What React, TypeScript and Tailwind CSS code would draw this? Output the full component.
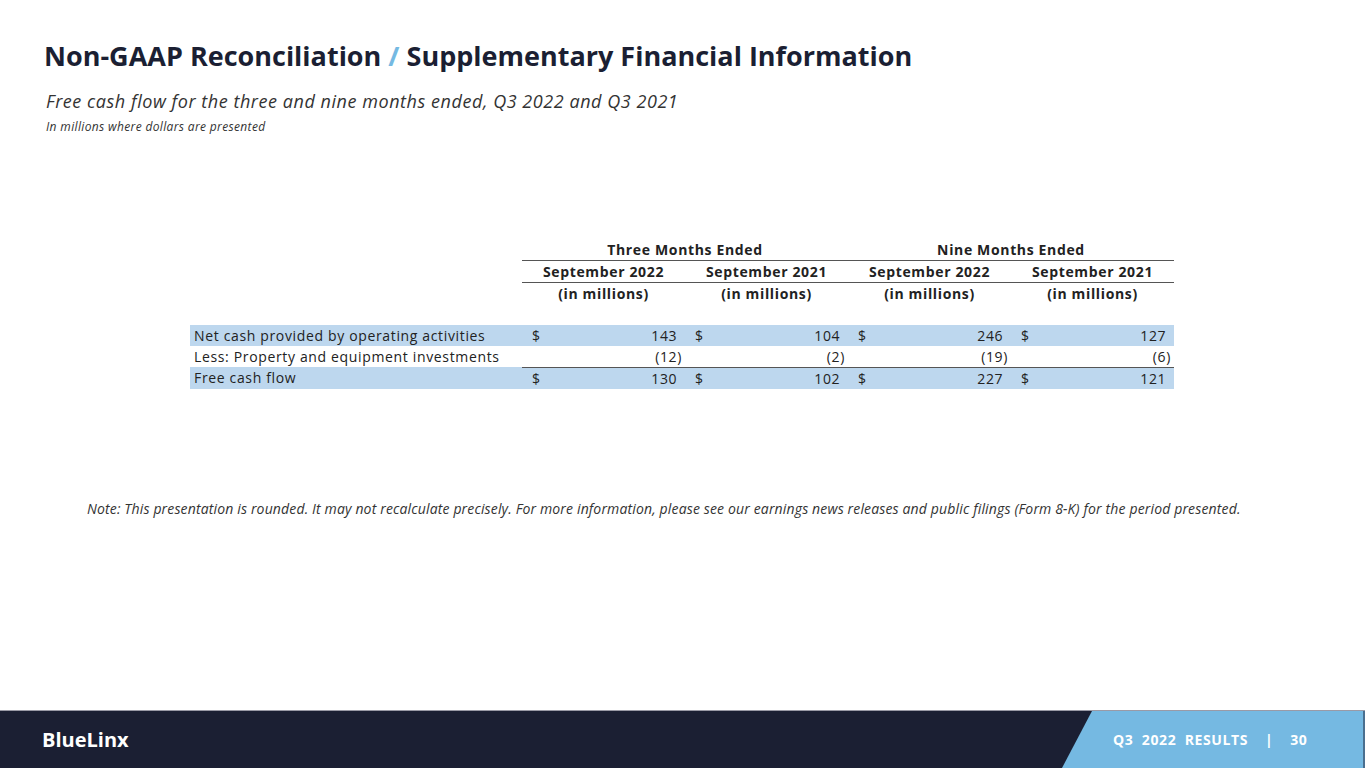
import { Fragment } from "react";

const rows = [
  { label: "Net cash provided by operating activities", shaded: true, dollar: true, values: [143, 104, 246, 127] },
  { label: "Less: Property and equipment investments", shaded: false, dollar: false, values: [-12, -2, -19, -6] },
  { label: "Free cash flow", shaded: true, dollar: true, values: [130, 102, 227, 121], topRule: true },
];

const periods = ["September 2022", "September 2021", "September 2022", "September 2021"];

function Amount({ value }: { value: number }) {
  if (value < 0) return <span>({Math.abs(value)})</span>;
  return (
    <span>
      {value}
      <span className="invisible">)</span>
    </span>
  );
}

export default function App() {
  return (
    <div
      className="flex h-[768px] w-full flex-col bg-white text-[#222222]"
      style={{ fontFamily: "'Open Sans', 'Liberation Sans', sans-serif" }}
    >
      <div className="flex-1 pl-[44px] pt-[40px]">
        <h1 className="text-[27px] font-bold leading-[32px] text-[#1b1f33]">
          Non-GAAP Reconciliation <span className="text-[#75b9e2]">/</span> Supplementary Financial Information
        </h1>
        <p className="mt-[18px] pl-[2px] text-[18px] italic leading-[22px] tracking-[0.55px] text-[#333333]">
          Free cash flow for the three and nine months ended, Q3 2022 and Q3 2021
        </p>
        <p className="mt-[8px] pl-[2px] text-[12px] italic leading-[14px] tracking-[0.35px] text-[#333333]">
          In millions where dollars are presented
        </p>

        <table className="ml-[146px] mt-[105px] table-fixed border-collapse text-[14px] leading-[21px] tracking-[0.65px]">
          <colgroup>
            <col className="w-[332px]" />
            {periods.map((_, i) => (
              <Fragment key={i}>
                <col className="w-[24px]" />
                <col className="w-[139px]" />
              </Fragment>
            ))}
          </colgroup>
          <thead className="font-bold">
            <tr className="h-[21px]">
              <th />
              <th colSpan={4} className="border-b border-[#555555] text-center font-bold">
                Three Months Ended
              </th>
              <th colSpan={4} className="border-b border-[#555555] text-center font-bold">
                Nine Months Ended
              </th>
            </tr>
            <tr className="h-[21px]">
              <th />
              {periods.map((p, i) => (
                <th key={i} colSpan={2} className="border-b border-[#555555] text-center font-bold">
                  {p}
                </th>
              ))}
            </tr>
            <tr className="h-[22px]">
              <th />
              {periods.map((_, i) => (
                <th key={i} colSpan={2} className="text-center font-bold">
                  (in millions)
                </th>
              ))}
            </tr>
            <tr className="h-[20px]">
              <th colSpan={9} />
            </tr>
          </thead>
          <tbody>
            {rows.map((r) => (
              <tr key={r.label} className={`h-[21px] ${r.shaded ? "bg-[#bdd7ee]" : ""}`}>
                <td className="whitespace-nowrap pl-[4px]">{r.label}</td>
                {r.values.map((v, i) => (
                  <Fragment key={i}>
                    <td className={`pl-[10px] ${r.topRule ? "border-t border-[#555555]" : ""}`}>
                      {r.dollar ? "$" : ""}
                    </td>
                    <td className={`pr-[3px] text-right ${r.topRule ? "border-t border-[#555555]" : ""}`}>
                      <Amount value={v} />
                    </td>
                  </Fragment>
                ))}
              </tr>
            ))}
          </tbody>
        </table>

        <p className="ml-[43px] mt-[111px] text-[14px] italic leading-[18px] tracking-[0.15px] text-[#333333]">
          Note: This presentation is rounded. It may not recalculate precisely. For more information, please see our
          earnings news releases and public filings (Form 8-K) for the period presented.
        </p>
      </div>

      <footer className="flex h-[58px] items-stretch border-t border-[#9a9aa6] bg-[#1b1f33]">
        <div className="flex flex-1 items-center pl-[42px]">
          <span className="text-[20px] font-bold text-white">BlueLinx</span>
        </div>
        <div
          className="flex w-[303px] items-center border-r-2 border-[#4a6f8f] bg-[#75b9e2] pl-[51px]"
          style={{ clipPath: "polygon(30px 0, 100% 0, 100% 100%, 0 100%)" }}
        >
          <span className="whitespace-pre text-[14px] font-bold tracking-[0.6px] text-white">
            {"Q3  2022  RESULTS    |    30"}
          </span>
        </div>
      </footer>
    </div>
  );
}
